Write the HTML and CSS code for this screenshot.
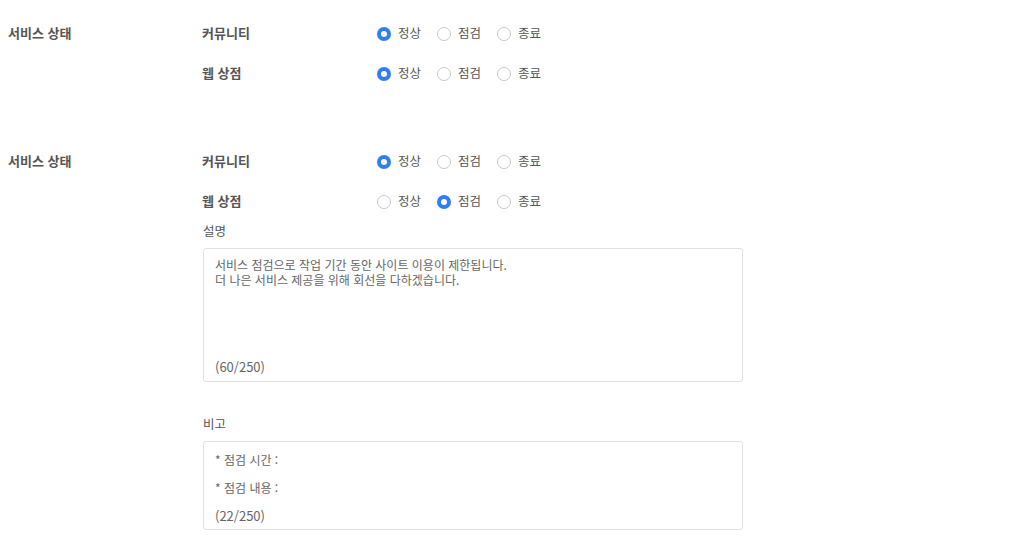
FILE: index.html
```html
<!DOCTYPE html>
<html lang="ko">
<head>
<meta charset="utf-8">
<link rel="stylesheet" href="styles.css">
</head>
<body>
<div class="page">
  <section class="section">
    <div class="sec-title">서비스 상태</div>
    <div class="sec-body">
      <div class="row">
        <div class="name">커뮤니티</div>
        <div class="radios">
          <label class="opt"><span class="dot on"></span>정상</label>
          <label class="opt"><span class="dot"></span>점검</label>
          <label class="opt"><span class="dot"></span>종료</label>
        </div>
      </div>
      <div class="row">
        <div class="name">웹 상점</div>
        <div class="radios">
          <label class="opt"><span class="dot on"></span>정상</label>
          <label class="opt"><span class="dot"></span>점검</label>
          <label class="opt"><span class="dot"></span>종료</label>
        </div>
      </div>
    </div>
  </section>

  <section class="section second">
    <div class="sec-title">서비스 상태</div>
    <div class="sec-body">
      <div class="row">
        <div class="name">커뮤니티</div>
        <div class="radios">
          <label class="opt"><span class="dot on"></span>정상</label>
          <label class="opt"><span class="dot"></span>점검</label>
          <label class="opt"><span class="dot"></span>종료</label>
        </div>
      </div>
      <div class="row">
        <div class="name">웹 상점</div>
        <div class="radios">
          <label class="opt"><span class="dot"></span>정상</label>
          <label class="opt"><span class="dot on"></span>점검</label>
          <label class="opt"><span class="dot"></span>종료</label>
        </div>
      </div>
      <div class="field">
        <div class="field-label">설명</div>
        <div class="box desc">
          <div class="desc-text">서비스 점검으로 작업 기간 동안 사이트 이용이 제한됩니다.<br>더 나은 서비스 제공을 위해 회선을 다하겠습니다.</div>
          <div class="count">(60/250)</div>
        </div>
      </div>
      <div class="field note-field">
        <div class="field-label">비고</div>
        <div class="box note">
          <div class="note-line">* 점검 시간 :</div>
          <div class="note-line">* 점검 내용 :</div>
          <div class="count">(22/250)</div>
        </div>
      </div>
    </div>
  </section>
</div>
</body>
</html>
```

FILE: styles.css
```css
* { box-sizing: border-box; }
html, body { margin: 0; padding: 0; background: #fff; }
body {
  font-family: "Noto Sans CJK KR", "Noto Sans", sans-serif;
  font-size: 12px;
  color: #555;
}
.page { padding: 13px 0 0 8px; }
.section { display: flex; }
.section.second { margin-top: 48px; }
.sec-title {
  width: 194px;
  font-size: 13px;
  font-weight: 700;
  color: #555;
  height: 40px;
  line-height: 39px;
}
.sec-body { display: flex; flex-direction: column; }
.row { display: flex; align-items: center; height: 40px; }
.name { width: 175px; font-size: 13px; font-weight: 700; color: #555; line-height: 18px; margin-top: -1px; }
.radios { display: flex; align-items: center; gap: 16px; }
.opt { display: flex; align-items: center; gap: 7px; color: #555; font-size: 12.5px; line-height: 18px; }
.dot {
  width: 14px; height: 14px; border-radius: 50%;
  border: 1px solid #c9c9c9; background: #fff;
  display: inline-block;
  margin-top: 1px;
}
.dot.on { border: 4px solid #2f7df6; }
.field { display: flex; flex-direction: column; padding-left: 1px; }
.field-label { height: 20px; line-height: 20px; font-size: 12.5px; color: #555; margin-bottom: 7px; }
.note-field { margin-top: 32px; }
.box {
  width: 540px;
  border: 1px solid #e2e2e2;
  border-radius: 3px;
  padding: 0 11px;
  color: #666;
}
.desc {
  height: 134px;
  display: flex; flex-direction: column; justify-content: space-between;
  padding-top: 8px; padding-bottom: 6px;
}
.desc-text { font-size: 12px; line-height: 15px; }
.count { line-height: 17px; font-size: 13px; }
.note { height: 89px; padding-top: 10px; }
.note-line { font-size: 12px; line-height: 16px; margin-bottom: 11.5px; }
```
